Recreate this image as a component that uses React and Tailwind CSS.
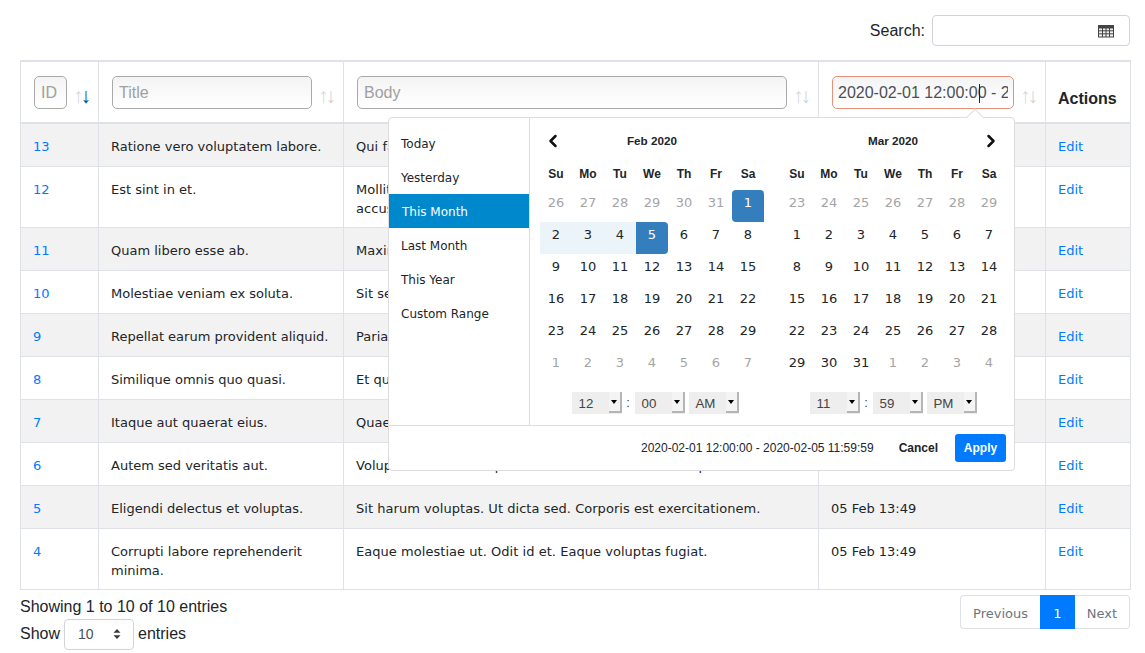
import { ChevronLeft, ChevronRight } from 'lucide-react'

const rows = [
  { id: 13, title: 'Ratione vero voluptatem labore.', body: 'Qui facere quia dolorem.', h: 'h-[43px]' },
  { id: 12, title: 'Est sint in et.', body: 'Mollitia quos sint velit nemo quia dolor sit amet consectetur adipisci accusamus et.', h: 'h-[61px]' },
  { id: 11, title: 'Quam libero esse ab.', body: 'Maxime voluptas.', h: 'h-[43px]' },
  { id: 10, title: 'Molestiae veniam ex soluta.', body: 'Sit sequi nemo.', h: 'h-[43px]' },
  { id: 9, title: 'Repellat earum provident aliquid.', body: 'Pariatur dolor.', h: 'h-[43px]' },
  { id: 8, title: 'Similique omnis quo quasi.', body: 'Et quia nulla.', h: 'h-[43px]' },
  { id: 7, title: 'Itaque aut quaerat eius.', body: 'Quae nihil sed.', h: 'h-[43px]' },
  { id: 6, title: 'Autem sed veritatis aut.', body: 'Voluptatem sit et ut quia rerum in sed aut nemo et quod esse.', h: 'h-[43px]' },
  { id: 5, title: 'Eligendi delectus et voluptas.', body: 'Sit harum voluptas. Ut dicta sed. Corporis est exercitationem.', time: '05 Feb 13:49', h: 'h-[43px]' },
  { id: 4, title: 'Corrupti labore reprehenderit minima.', body: 'Eaque molestiae ut. Odit id et. Eaque voluptas fugiat.', time: '05 Feb 13:49', h: 'h-[61px]' },
]

const ranges = ['Today', 'Yesterday', 'This Month', 'Last Month', 'This Year', 'Custom Range']
const days = ['Su', 'Mo', 'Tu', 'We', 'Th', 'Fr', 'Sa']

const feb = [
  [26, 27, 28, 29, 30, 31, 1],
  [2, 3, 4, 5, 6, 7, 8],
  [9, 10, 11, 12, 13, 14, 15],
  [16, 17, 18, 19, 20, 21, 22],
  [23, 24, 25, 26, 27, 28, 29],
  [1, 2, 3, 4, 5, 6, 7],
]
const mar = [
  [23, 24, 25, 26, 27, 28, 29],
  [1, 2, 3, 4, 5, 6, 7],
  [8, 9, 10, 11, 12, 13, 14],
  [15, 16, 17, 18, 19, 20, 21],
  [22, 23, 24, 25, 26, 27, 28],
  [29, 30, 31, 1, 2, 3, 4],
]

const SortArrows = ({ active }) => (
  <span className="absolute right-[7px] bottom-[16px] flex text-[21px] leading-none font-['Liberation_Sans',sans-serif]">
    <span className="text-[#4a6a9a] opacity-25">↑</span>
    <span className={active ? '-ml-[3px] text-[#0f3f80]' : '-ml-[3px] text-[#212529] opacity-20'}>↓</span>
  </span>
)

const HeaderInput = ({ placeholder, value, className }) => (
  <input
    readOnly
    placeholder={placeholder}
    value={value}
    className={`block h-[33px] rounded-[5px] border bg-gradient-to-b from-[#f4f4f4] to-white pt-[2px] text-[16px] text-[#495057] placeholder-[#a0a0a0] outline-none ${className}`}
  />
)

const TimeSelect = ({ value, className }) => (
  <div className={`flex h-[22px] w-[50px] items-center justify-between bg-[#eee] pl-[7px] text-[13.3px] text-[#444] ${className || ''}`}>
    <span className="pt-[2px]">{value}</span>
    <span className="flex h-[21px] w-[13px] items-center justify-center self-start border-r-2 border-b-2 border-[#b5b5b5] bg-[#f4f4f4]">
      <span className="border-x-[3px] border-t-[4px] border-x-transparent border-t-black" />
    </span>
  </div>
)

const Calendar = ({ title, weeks, left, right, isOff, isStart, isEnd, inRange, times, timeClass }) => (
  <div className="w-[224px]">
    <div className="flex h-[31px] items-center justify-between pb-[2px] text-[#111]">
      <span className="flex w-[32px] justify-center -translate-x-[3px]">{left && <ChevronLeft size={20} strokeWidth={3} />}</span>
      <span className="text-[11.7px] font-bold text-[#212529]">{title}</span>
      <span className="flex w-[32px] justify-center translate-x-[2px]">{right && <ChevronRight size={20} strokeWidth={3} />}</span>
    </div>
    <div className="grid h-[33px] grid-cols-7 items-center text-center text-[12px] font-bold text-[#212529]">
      {days.map((d) => <span key={d}>{d}</span>)}
    </div>
    {weeks.map((week, w) => (
      <div key={w} className="grid h-[32px] grid-cols-7 text-center font-['DejaVu_Sans',sans-serif] text-[13px] leading-[26px]">
        {week.map((d, i) => {
          let cls = 'text-[#212529]'
          if (isOff(w, i)) cls = 'text-[#a5a5a5]'
          if (inRange(w, i)) cls = 'bg-[#ebf4f8] text-[#212529]'
          if (isStart(w, i)) cls = 'rounded-tl-[4px] rounded-bl-[4px] rounded-tr-[4px] bg-[#357ebd] text-white'
          if (isEnd(w, i)) cls = 'rounded-tr-[4px] rounded-br-[4px] bg-[#357ebd] text-white'
          return <span key={i} className={cls}>{d}</span>
        })}
      </div>
    ))}
    <div className={`mt-[10px] flex items-center justify-center text-[#444] ${timeClass || ''}`}>
      <TimeSelect value={times[0]} />
      <span className="w-[13px] text-center text-[13px]">:</span>
      <TimeSelect value={times[1]} />
      <TimeSelect value={times[2]} className="ml-[4px]" />
    </div>
  </div>
)

const DatePopup = () => (
  <div className="absolute top-[117px] left-[388px] z-10 h-[354px] w-[627px] rounded-[4px] border border-[#ddd] bg-white font-['Liberation_Sans',sans-serif]">
    <span className="absolute -top-[7px] right-[33px] h-[12px] w-[12px] rotate-45 border-t border-l border-[#ddd] bg-white" />
    <div className="relative flex h-[308px] border-b border-[#ddd]">
      <ul className="w-[141px] border-r border-[#ddd] pt-[8px] font-['DejaVu_Sans',sans-serif] text-[12px] text-[#212529]">
        {ranges.map((r) => (
          <li key={r} className={r === 'This Month' ? 'flex h-[34px] items-center bg-[#08c] pt-[2px] pl-[13px] text-white' : 'flex h-[34px] items-center pt-[2px] pl-[12px]'}>
            {r}
          </li>
        ))}
      </ul>
      <div className="flex gap-[17px] pt-[8px] pl-[10px]">
        <Calendar
          title="Feb 2020"
          weeks={feb}
          left
          times={['12', '00', 'AM']}
          timeClass="translate-x-[3px]"
          isOff={(w, i) => w === 5 || (w === 0 && i < 6)}
          isStart={(w, i) => w === 0 && i === 6}
          isEnd={(w, i) => w === 1 && i === 3}
          inRange={(w, i) => w === 1 && i < 3}
        />
        <Calendar
          title="Mar 2020"
          weeks={mar}
          right
          times={['11', '59', 'PM']}
          isOff={(w, i) => w === 0 || (w === 5 && i > 2)}
          isStart={() => false}
          isEnd={() => false}
          inRange={() => false}
        />
      </div>
    </div>
    <div className="flex h-[44px] items-center justify-end pr-[8px] text-[12px] text-[#212529]">
      <span>2020-02-01 12:00:00 - 2020-02-05 11:59:59</span>
      <span className="ml-[25px] font-bold">Cancel</span>
      <span className="ml-[17px] flex h-[28px] w-[51px] items-center justify-center rounded-[3px] bg-[#007bff] font-bold text-white">Apply</span>
    </div>
  </div>
)

const App = () => {
  return (
    <div className="relative h-[653px] w-[1145px] overflow-hidden bg-white pr-[15px] pl-[20px] font-['Liberation_Sans',sans-serif] text-[16px] text-[#212529]">
      <div className="flex h-[60px] items-start justify-end pt-[15px]">
        <label className="mr-[7px] leading-[31px]">Search:</label>
        <div className="flex h-[31px] w-[198px] items-center justify-end rounded-[4px] border border-[#ced4da] pr-[15px]">
          <svg width="16" height="14" viewBox="0 0 16 14" fill="none" stroke="#444" strokeWidth="1">
            <rect x="0.5" y="1.5" width="15" height="11.5" fill="#eee" />
            <path d="M0.5 1.5h15v2.5h-15z" fill="#444" />
            <path d="M0.5 6.8h15M0.5 9.8h15M4.5 4v9M8 4v9M11.5 4v9" />
          </svg>
        </div>
      </div>

      <table className="w-[1110px] table-fixed border-collapse font-['DejaVu_Sans',sans-serif] text-[13px]">
        <colgroup>
          <col className="w-[78px]" />
          <col className="w-[245px]" />
          <col className="w-[475px]" />
          <col className="w-[227px]" />
          <col className="w-[85px]" />
        </colgroup>
        <thead>
          <tr className="h-[62px] border-t-2 border-b-2 border-[#dee2e6]">
            <th className="relative border-x border-[#dee2e6] pl-[13px] text-left font-normal">
              <HeaderInput placeholder="ID" className="w-[33px] border-[#aaa] px-[6px] font-['Liberation_Sans',sans-serif]" />
              <SortArrows active />
            </th>
            <th className="relative border-x border-[#dee2e6] pl-[13px] text-left font-normal">
              <HeaderInput placeholder="Title" className="w-[200px] border-[#aaa] px-[6px] font-['Liberation_Sans',sans-serif]" />
              <SortArrows />
            </th>
            <th className="relative border-x border-[#dee2e6] pl-[13px] text-left font-normal">
              <HeaderInput placeholder="Body" className="w-[430px] border-[#aaa] px-[6px] font-['Liberation_Sans',sans-serif]" />
              <SortArrows />
            </th>
            <th className="relative border-x border-[#dee2e6] pl-[13px] text-left font-normal">
              <HeaderInput value="2020-02-01 12:00:00 - 2020-02-05 11:59:59" className="w-[182px] border-[#e8917a] px-[5px] font-['Liberation_Sans',sans-serif]" />
              <span className="absolute top-[22px] left-[160px] h-[19px] w-px bg-[#222]" />
              <SortArrows />
            </th>
            <th className="border-x border-[#dee2e6] pt-[14px] pl-[12px] text-left font-['Liberation_Sans',sans-serif] text-[16px] font-bold">Actions</th>
          </tr>
        </thead>
        <tbody>
          {rows.map((row, i) => (
            <tr key={row.id} className={`${row.h} border-b border-[#dee2e6] ${i % 2 === 0 ? 'bg-[#f2f2f2]' : 'bg-white'}`}>
              <td className="border-x border-[#dee2e6] px-[12px] pt-[13px] align-top leading-[19px] text-[#007bff]">{row.id}</td>
              <td className="border-x border-[#dee2e6] px-[12px] pt-[13px] align-top leading-[19px]">{row.title}</td>
              <td className="border-x border-[#dee2e6] px-[12px] pt-[13px] align-top leading-[19px] tracking-[0.04px]">{row.body}</td>
              <td className="border-x border-[#dee2e6] px-[12px] pt-[13px] align-top leading-[19px]">{row.time || '05 Feb 13:49'}</td>
              <td className="border-x border-[#dee2e6] px-[12px] pt-[13px] align-top leading-[19px] text-[#007bff]">Edit</td>
            </tr>
          ))}
        </tbody>
      </table>

      <div className="flex justify-between pt-[5px]">
        <div>
          <div className="leading-[24px]">Showing 1 to 10 of 10 entries</div>
          <div className="flex items-center">
            <span>Show</span>
            <div className="mx-[4px] flex h-[31px] w-[70px] items-center justify-between rounded-[4px] border border-[#ced4da] pr-[12px] pl-[13px] text-[14px] text-[#495057]">
              <span>10</span>
              <svg width="8" height="12" viewBox="0 0 8 12" fill="#343a40">
                <path d="M4 1 L7.5 4.8 H0.5 Z M4 11 L0.5 7.2 H7.5 Z" />
              </svg>
            </div>
            <span>entries</span>
          </div>
        </div>
        <div className="flex h-[34px] items-stretch font-['DejaVu_Sans',sans-serif] text-[13px] text-[#6c757d]">
          <span className="flex w-[80px] items-center justify-center rounded-l-[4px] border border-r-0 border-[#dee2e6] pt-[4px]">Previous</span>
          <span className="flex w-[35px] items-center justify-center bg-[#007bff] pt-[4px] text-white">1</span>
          <span className="flex w-[55px] items-center justify-center rounded-r-[4px] border border-l-0 border-[#dee2e6] pt-[4px]">Next</span>
        </div>
      </div>

      <DatePopup />
    </div>
  )
}

export default App
